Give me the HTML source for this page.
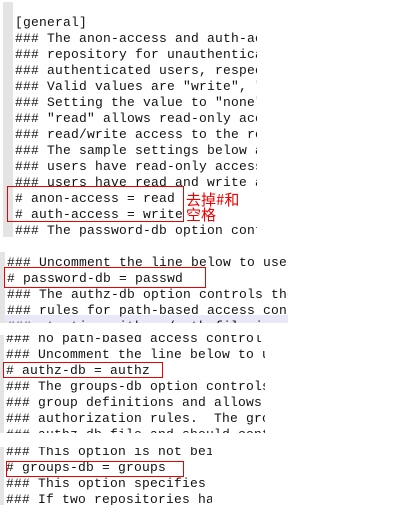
<!DOCTYPE html>
<html><head><meta charset="utf-8"><style>
html,body{margin:0;padding:0;background:#fff;width:420px;height:516px;overflow:hidden;position:relative}
.s{position:absolute;overflow:hidden;background:#fff}
.g{position:absolute;left:0;top:0;bottom:0;background:#e4e4e4}
.l{position:absolute;white-space:pre;font:13px/16px "Liberation Mono",monospace;letter-spacing:0.2px;color:#111}
.b{position:absolute;border:1.5px solid #e00;box-sizing:border-box}
.r{position:absolute;color:#e00;font:15px/15px "Noto Sans CJK SC",sans-serif;white-space:pre}
</style></head><body>
<div class="s" style="left:3px;top:2px;width:254px;height:235px">
<div class="g" style="width:10px"></div>
<div class="l" style="left:12px;top:13px">[general]
### The anon-access and auth-access options control access to the
### repository for unauthenticated users and
### authenticated users, respectively.
### Valid values are "write", "read",
### Setting the value to "none" prohibits access;
### "read" allows read-only access, and "write" allows complete
### read/write access to the repository.
### The sample settings below are the defaults and specify that anonymous
### users have read-only access to the repository, while authenticated
### users have read and write access to the repository.
# anon-access = read
# auth-access = write
### The password-db option controls</div>
</div>
<div class="b" style="left:7px;top:186px;width:177px;height:36px"></div>
<div class="r" style="left:186px;top:192px">去掉#和</div>
<div class="r" style="left:186px;top:207px">空格</div>

<div class="s" style="left:0;top:252px;width:288px;height:71px">
<div class="g" style="width:5px"></div>
<div style="position:absolute;left:5px;right:0;top:63px;height:8px;background:#e8e8f8"></div>
<div class="l" style="left:7px;top:3px">### Uncomment the line below to use
# password-db = passwd
### The authz-db option controls the
### rules for path-based access control
### starting with a /path file is a</div>
</div>
<div class="b" style="left:4px;top:267px;width:202px;height:21px"></div>

<div class="s" style="left:0;top:335px;width:265px;height:98px">
<div class="g" style="width:4px"></div>
<div class="l" style="left:6px;top:-4px">### no path-based access control
### Uncomment the line below to use
# authz-db = authz
### The groups-db option controls
### group definitions and allows
### authorization rules.  The groups
### authz-db file and should contain</div>
</div>
<div class="b" style="left:3px;top:362px;width:160px;height:16px"></div>

<div class="s" style="left:0;top:447px;width:212px;height:58px">
<div class="g" style="width:4px"></div>
<div class="l" style="left:6px;top:-3px">### This option is not being used
# groups-db = groups
### This option specifies
### If two repositories have</div>
</div>
<div class="b" style="left:6px;top:461px;width:178px;height:16px"></div>
</body></html>
